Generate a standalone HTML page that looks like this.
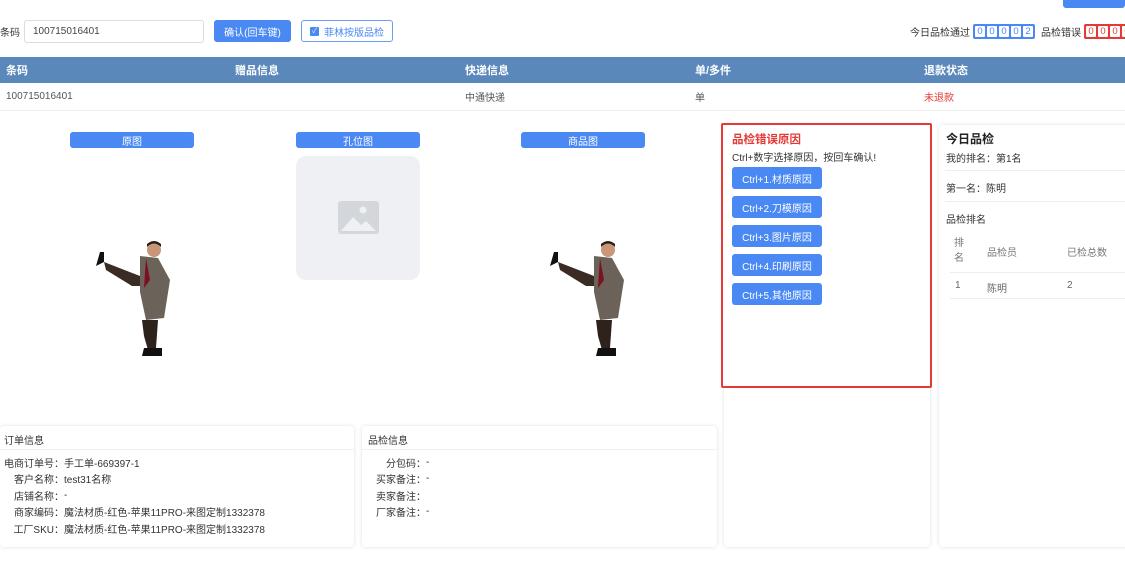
<!DOCTYPE html>
<html><head><meta charset="utf-8"><style>
*{box-sizing:border-box;margin:0;padding:0}
body{width:1125px;height:585px;overflow:hidden;background:#fff;font-family:"Liberation Sans","Noto Sans CJK SC",sans-serif;font-size:10px;color:#333;position:relative}
.a{position:absolute;white-space:nowrap}
.btn{position:absolute;background:#4a89f3;color:#fff;border-radius:3px;font-size:10px;display:flex;align-items:center;justify-content:center;white-space:nowrap}
.card{position:absolute;background:#fff;border-radius:4px;box-shadow:0 0 4px rgba(0,0,0,.12)}
.dg{position:absolute;display:flex;gap:2px;padding:2px;border-radius:2px;height:15px}
.dg span{width:10px;height:11px;background:#fff;display:flex;align-items:center;justify-content:center;font-size:9.5px;border-radius:1px}
.th{position:absolute;top:57px;height:26px;display:flex;align-items:center;color:#fff;font-weight:bold;font-size:11px}
.td{position:absolute;top:83px;height:27px;display:flex;align-items:center;font-size:10px;color:#555}
.lbl{text-align:right;display:inline-block;width:60px}
.rows div{height:16.5px;display:flex;align-items:center;white-space:nowrap}
</style></head><body>
<div class="btn" style="left:1063px;top:-8px;width:62px;height:16px"></div>
<div class="a" style="left:0;top:20px;height:23px;display:flex;align-items:center">条码</div>
<div class="a" style="left:24px;top:20px;width:180px;height:23px;border:1px solid #ddd;border-radius:3px;padding-left:8px;display:flex;align-items:center;color:#444">100715016401</div>
<div class="btn" style="left:214px;top:20px;width:77px;height:22px">确认(回车键)</div>
<div class="a" style="left:301px;top:20px;width:92px;height:22px;border:1px solid #6a9ef5;border-radius:3px;color:#4a89f3;display:flex;align-items:center;padding-left:8px"><span style="display:inline-flex;align-items:center;justify-content:center;width:9px;height:9px;background:#4a89f3;color:#fff;font-size:7px;border-radius:1px;margin-right:5px">✓</span>菲林按版品检</div>
<div class="a" style="left:910px;top:24px;height:15px;display:flex;align-items:center">今日品检通过</div>
<div class="dg" style="left:973px;top:24px;background:#4a89f3;color:#4a89f3"><span>0</span><span>0</span><span>0</span><span>0</span><span>2</span></div>
<div class="a" style="left:1041px;top:24px;height:15px;display:flex;align-items:center">品检错误</div>
<div class="dg" style="left:1084px;top:24px;background:#e53935;color:#e53935"><span>0</span><span>0</span><span>0</span><span>0</span></div>
<div class="a" style="left:0;top:57px;width:1125px;height:26px;background:#5b88bb"></div>
<div class="th" style="left:6px">条码</div><div class="th" style="left:235px">赠品信息</div><div class="th" style="left:465px">快递信息</div><div class="th" style="left:695px">单/多件</div><div class="th" style="left:924px">退款状态</div>
<div class="a" style="left:0;top:110px;width:1125px;height:1px;background:#eee"></div>
<div class="td" style="left:6px">100715016401</div><div class="td" style="left:465px">中通快递</div><div class="td" style="left:695px">单</div><div class="td" style="left:924px;color:#e53935">未退款</div>

<div class="btn" style="left:70px;top:132px;width:124px;height:16px">原图</div>
<div class="btn" style="left:296px;top:132px;width:124px;height:16px">孔位图</div>
<div class="btn" style="left:521px;top:132px;width:124px;height:16px">商品图</div>
<div class="a" style="left:296px;top:156px;width:124px;height:124px;background:#eef0f3;border-radius:10px"></div>
<svg class="a" style="left:338px;top:201px" width="41" height="33" viewBox="0 0 41 33"><rect width="41" height="33" rx="3" fill="#d3d6db"/><circle cx="25" cy="9" r="3.5" fill="#eef0f3"/><path d="M3 30 L15 16 L23 24 L28 20 L38 30 Z" fill="#eef0f3"/></svg>

<svg class="a" style="left:92px;top:240px" width="82" height="118" viewBox="0 0 82 118">
<path d="M4 26 L8 12 L12 12 L12 22 Z" fill="#111"/>
<path d="M12 22 L48 36 L52 46 L40 46 L14 30 Z" fill="#3a2c24"/>
<path d="M48 16 L66 18 L78 40 L72 78 L54 80 L48 52 Z" fill="#6b635a"/>
<path d="M54 18 L58 40 L52 48 Z" fill="#7a1020"/>
<circle cx="62" cy="10" r="7" fill="#c9967a"/><path d="M55 7 Q62 0 69 7 L69 4 Q62 -2 55 4 Z" fill="#2a1e18"/>
<path d="M50 80 L66 80 L64 108 L56 110 L52 96 Z" fill="#2d221c"/>
<path d="M52 108 L70 108 L70 116 L50 116 Z" fill="#111"/>
</svg>
<svg class="a" style="left:546px;top:240px" width="82" height="118" viewBox="0 0 82 118">
<path d="M4 26 L8 12 L12 12 L12 22 Z" fill="#111"/>
<path d="M12 22 L48 36 L52 46 L40 46 L14 30 Z" fill="#3a2c24"/>
<path d="M48 16 L66 18 L78 40 L72 78 L54 80 L48 52 Z" fill="#6b635a"/>
<path d="M54 18 L58 40 L52 48 Z" fill="#7a1020"/>
<circle cx="62" cy="10" r="7" fill="#c9967a"/><path d="M55 7 Q62 0 69 7 L69 4 Q62 -2 55 4 Z" fill="#2a1e18"/>
<path d="M50 80 L66 80 L64 108 L56 110 L52 96 Z" fill="#2d221c"/>
<path d="M52 108 L70 108 L70 116 L50 116 Z" fill="#111"/>
</svg>

<div class="card" style="left:724px;top:125px;width:206px;height:422px"></div>
<div class="a" style="left:721px;top:123px;width:211px;height:265px;border:2px solid #e53935;border-radius:2px;background:#fff"></div>
<div class="a" style="left:732px;top:131px;color:#e53935;font-weight:bold;font-size:11.5px">品检错误原因</div>
<div class="a" style="left:732px;top:149px;font-size:10px;color:#333">Ctrl+数字选择原因，按回车确认!</div>
<div class="btn" style="left:732px;top:167px;width:90px;height:22px">Ctrl+1.材质原因</div>
<div class="btn" style="left:732px;top:196px;width:90px;height:22px">Ctrl+2.刀模原因</div>
<div class="btn" style="left:732px;top:225px;width:90px;height:22px">Ctrl+3.图片原因</div>
<div class="btn" style="left:732px;top:254px;width:90px;height:22px">Ctrl+4.印刷原因</div>
<div class="btn" style="left:732px;top:283px;width:90px;height:22px">Ctrl+5.其他原因</div>

<div class="card" style="left:939px;top:125px;width:200px;height:422px"></div>
<div class="a" style="left:946px;top:130px;font-weight:bold;font-size:12px;color:#222">今日品检</div>
<div class="a" style="left:946px;top:150px">我的排名：第1名</div>
<div class="a" style="left:945px;top:170px;width:180px;height:1px;background:#eee"></div>
<div class="a" style="left:946px;top:180px">第一名：陈明</div>
<div class="a" style="left:945px;top:201px;width:180px;height:1px;background:#eee"></div>
<div class="a" style="left:946px;top:211px">品检排名</div>
<div class="a" style="left:954px;top:236px;color:#777;line-height:15px">排<br>名</div>
<div class="a" style="left:987px;top:244px;color:#777">品检员</div>
<div class="a" style="left:1067px;top:244px;color:#777">已检总数</div>
<div class="a" style="left:950px;top:272px;width:175px;height:1px;background:#eee"></div>
<div class="a" style="left:955px;top:280px;color:#666">1</div>
<div class="a" style="left:987px;top:280px;color:#666">陈明</div>
<div class="a" style="left:1067px;top:280px;color:#666">2</div>
<div class="a" style="left:950px;top:298px;width:175px;height:1px;background:#eee"></div>

<div class="card" style="left:0;top:426px;width:354px;height:121px"></div>
<div class="a" style="left:4px;top:432px">订单信息</div>
<div class="a" style="left:0;top:449px;width:354px;height:1px;background:#f0f0f0"></div>
<div class="a rows" style="left:4px;top:454px;color:#333">
<div><span class="lbl">电商订单号：</span>手工单-669397-1</div>
<div><span class="lbl">客户名称：</span>test31名称</div>
<div><span class="lbl">店铺名称：</span>-</div>
<div><span class="lbl">商家编码：</span>魔法材质-红色-苹果11PRO-来图定制1332378</div>
<div><span class="lbl">工厂SKU：</span>魔法材质-红色-苹果11PRO-来图定制1332378</div>
</div>
<div class="card" style="left:362px;top:426px;width:355px;height:121px"></div>
<div class="a" style="left:368px;top:432px">品检信息</div>
<div class="a" style="left:362px;top:449px;width:355px;height:1px;background:#f0f0f0"></div>
<div class="a rows" style="left:366px;top:454px;color:#333">
<div><span class="lbl">分包码：</span>-</div>
<div><span class="lbl">买家备注：</span>-</div>
<div><span class="lbl">卖家备注：</span></div>
<div><span class="lbl">厂家备注：</span>-</div>
</div>
</body></html>
